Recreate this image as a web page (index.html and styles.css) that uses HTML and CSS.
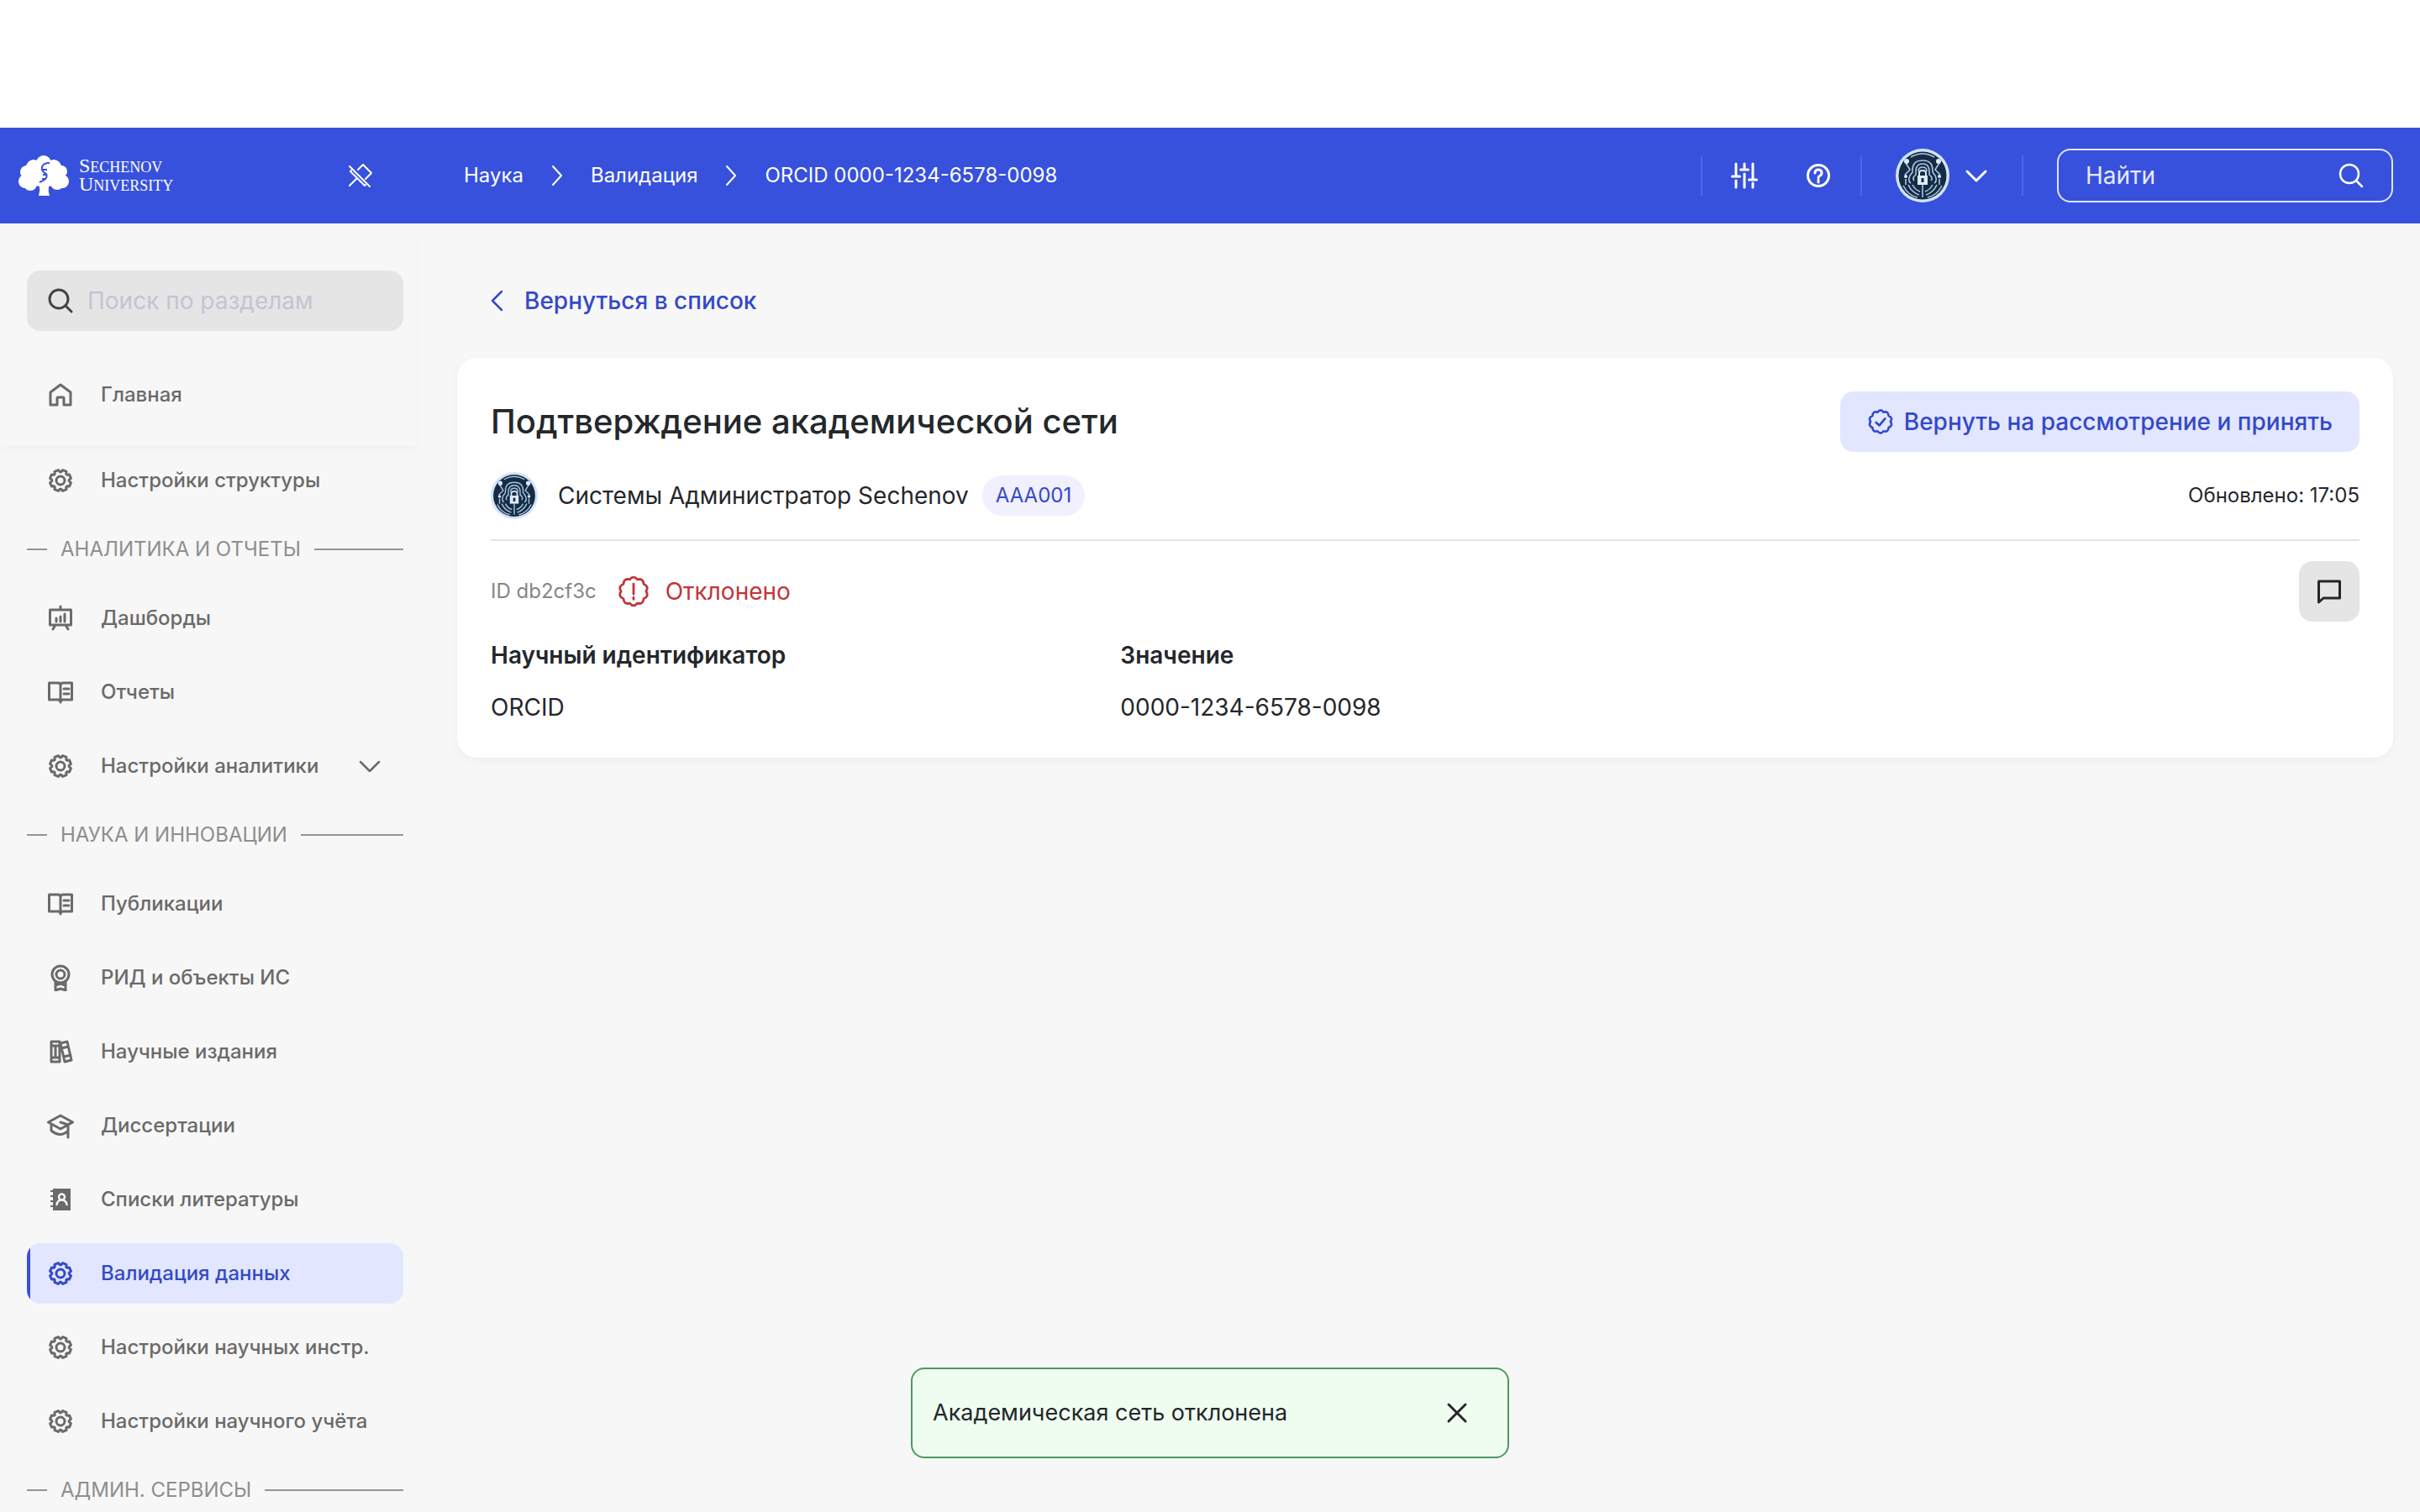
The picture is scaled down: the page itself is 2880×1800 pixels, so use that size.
FILE: index.html
```html
<!DOCTYPE html>
<html lang="ru">
<head>
<meta charset="utf-8">
<title>ORCID 0000-1234-6578-0098</title>
<link rel="stylesheet" href="styles.css">
</head>
<body>
<svg class="sprite" aria-hidden="true">
  <symbol id="i-gear" viewBox="-16 -16 32 32"><path d="M10.2-.7L10.2.7 12.4 2.6 10.6 7 7.7 6.7 6.7 7.7 7 10.6 2.6 12.4.7 10.2-.7 10.2-2.6 12.4-7 10.6-6.7 7.7-7.7 6.7-10.6 7-12.4 2.6-10.2.7-10.2-.7-12.4-2.6-10.6-7-7.7-6.7-6.7-7.7-7-10.6-2.6-12.4-.7-10.2.7-10.2 2.6-12.4 7-10.6 6.7-7.7 7.7-6.7 10.6-7 12.4-2.6z"/><circle r="5"/></symbol>
  <symbol id="i-search" viewBox="0 0 32 32"><circle cx="14" cy="14" r="11"/><path d="M22 22l7 7"/></symbol>
  <symbol id="i-down" viewBox="0 0 32 32"><path d="M5 11l11 11 11-11"/></symbol>
  <symbol id="i-right" viewBox="0 0 32 32"><path d="M11 5l10 11-10 11"/></symbol>
  <symbol id="i-left" viewBox="0 0 32 32"><path d="M21 5L10 16l11 11"/></symbol>
  <symbol id="i-home" viewBox="0 0 32 32"><path d="M4 13L16 4l12 9v15h-8v-8q0-1-1-1h-6q-1 0-1 1v8H4z"/></symbol>
  <symbol id="i-board" viewBox="0 0 32 32"><path d="M3.500 6h25v18h-25zM16 2v4M10 24l-3 5M22 24l3 5M11 16v4M16 14v6M21 11v9"/></symbol>
  <symbol id="i-book" viewBox="0 0 32 32"><path d="M2.500 5H13q3 0 3 3 0-3 3-3h10.500v20H19q-3 0-3 3 0-3-3-3H2.500zM16 8v20M20 12h6M20 18h6"/></symbol>
  <symbol id="i-award" viewBox="0 0 32 32"><circle cx="16" cy="12" r="10"/><circle cx="16" cy="12" r="5"/><path d="M10 21v10l6-2 6 2V21M10 25l6-2 6 2"/></symbol>
  <symbol id="i-binders" viewBox="0 0 32 32"><path d="M5 4h10v24H5zM5 9h10M5 23h10M16 6l8-2 5 22-8 2zM17 12l8-2M20 22l8-2M10 9v14"/></symbol>
  <symbol id="i-cap" viewBox="0 0 32 32"><path d="M1.500 12L16 4l14.500 8L16 20zM5 14v8q11 9 20 0M16 12l9 3v15M25 15l3-2"/></symbol>
  <symbol id="i-contacts" viewBox="0 0 32 32"><path class="solid" d="M7 3h21v26H7v-4H4v-2h3v-4H4v-2h3v-4H4v-2h3V7H4V5h3z"/><circle class="cut" cx="17.500" cy="13" r="3.500"/><path class="cut" d="M11.500 22q1-5.500 6-5.500t6 5.500"/></symbol>
  <symbol id="i-pin" viewBox="0 0 32 32"><path d="M13 9l6-6 10 10-7 7M3 5l24 24M5 10l-1 1 17 17 1-1M11 20l-8 8"/></symbol>
  <symbol id="i-sliders" viewBox="0 0 32 32"><path d="M6 2v15M6 22v8M1.500 17h9M16 2v6M16 14v16M11.500 9h9M26 2v16M26 25v5M21.500 21h9M26 18v3"/></symbol>
  <symbol id="i-help" viewBox="0 0 32 32"><circle cx="16" cy="16" r="12.500"/><path d="M12 13q0-4 4-4t4 4q0 2-2 3t-2 3M16 21.500v2.500"/></symbol>
  <symbol id="i-seal" viewBox="-18 -18 36 36"><path d="M-4.100-12.700Q0-17.800 4.100-12.700 10.400-14.400 10.800-7.900 16.800-5.500 13.400 0 16.800 5.500 10.800 7.900 10.400 14.400 4.100 12.700 0 17.800-4.100 12.700-10.400 14.400-10.800 7.900-16.800 5.500-13.400 0-16.800-5.500-10.800-7.900-10.400-14.400-4.100-12.700z"/></symbol>
  <symbol id="i-reject" viewBox="-18 -18 36 36"><use href="#i-seal" x="-18" y="-18" width="36" height="36"/><path d="M0-8V3M0 6.500V8.500"/></symbol>
  <symbol id="i-accept" viewBox="-18 -18 36 36"><use href="#i-seal" x="-18" y="-18" width="36" height="36"/><path d="M-6 1l4.500 4L6-4"/></symbol>
  <symbol id="i-comment" viewBox="0 0 32 32"><path d="M3.500 4h25v20H9l-5.500 5z"/></symbol>
  <symbol id="i-close" viewBox="0 0 32 32"><path d="M6 6l20 20M26 6L6 26"/></symbol>
  <symbol id="i-avatar" viewBox="0 0 64 64">
    <circle cx="32" cy="32" r="32" fill="#d3e3fa"/><circle cx="32" cy="32" r="28.500" fill="#152c44"/>
    <g fill="none" stroke="#a9c6e2" stroke-width="1.600">
      <path d="M18 41q-4-3-1-9l3-4q-1-14 12-14t12 14l3 4q3 6-1 9M22 38q-3-3 2-7v-4q0-9 8-9t8 9v4q5 4 2 7M27 27q0-5 5-5t5 5"/>
      <path d="M9 44q6 12 17 14M55 44q-6 12-17 14M15 43q4 9 13 12M49 43q-4 9-13 12M20 43q3 6 9 8M44 43q-3 6-9 8M12 17l5 8-6 6M52 17l-5 8 6 6M12 36v7M52 36v7M18 10q14-8 28 0M32 43v15"/>
      <path d="M28 32v-3q0-3 4-3t4 3v3" stroke="#dcebfa" stroke-width="2"/>
    </g>
    <g fill="#dcebfa"><circle cx="13" cy="15" r="3"/><circle cx="51" cy="15" r="3"/><circle cx="12" cy="33" r="2"/><circle cx="52" cy="33" r="2"/><rect x="26" y="32" width="12" height="11"/></g>
    <path d="M32 35v5" stroke="#152c44" stroke-width="3"/>
  </symbol>
</svg>

<div class="app">
  <header class="topbar">
    <div class="brand-area">
      <a class="brand" href="#">
        <svg class="tree" viewBox="0 0 60 48" aria-hidden="true">
          <g fill="#fff"><circle cx="30" cy="9" r="9"/><circle cx="18" cy="14" r="9"/><circle cx="42" cy="14" r="9"/><circle cx="51" cy="19" r="7"/><circle cx="10" cy="20" r="8"/><circle cx="8" cy="31" r="8"/><circle cx="52" cy="31" r="8"/><circle cx="14" cy="34" r="8"/><circle cx="46" cy="33" r="8"/><path d="M12 16h36v18l-12 3q-1 6 1 11H24q2-6 1-11l-13-3z"/></g>
          <path d="M37 9q-8 0-9 5t5 8q3 6-8 10M27 17h7M29 23h5M28 28h5" fill="none" stroke="#3751dd" stroke-width="2"/>
        </svg>
        <span class="brand-name"><span>S<small>ECHENOV</small></span><span>U<small>NIVERSITY</small></span></span>
      </a>
      <button class="icon-button" aria-label="Открепить меню"><svg class="icon thin"><use href="#i-pin"/></svg></button>
    </div>
    <nav class="crumbs">
      <a href="#">Наука</a><svg class="icon thin"><use href="#i-right"/></svg>
      <a href="#">Валидация</a><svg class="icon thin"><use href="#i-right"/></svg>
      <a href="#">ORCID 0000-1234-6578-0098</a>
    </nav>
    <div class="tools">
      <button class="icon-button wide" aria-label="Настройки"><svg class="icon bold"><use href="#i-sliders"/></svg></button>
      <button class="icon-button wide" aria-label="Помощь"><svg class="icon bold"><use href="#i-help"/></svg></button>
    </div>
    <button class="profile" aria-label="Профиль"><svg class="avatar large"><use href="#i-avatar"/></svg><svg class="icon bold"><use href="#i-down"/></svg></button>
    <div class="find-area">
      <label class="find"><input type="search" placeholder="Найти" aria-label="Найти"><svg class="icon"><use href="#i-search"/></svg></label>
    </div>
  </header>

  <div class="body">
    <aside class="sidebar">
      <div class="sidebar-top">
        <label class="section-search"><svg class="icon bold"><use href="#i-search"/></svg><input type="search" placeholder="Поиск по разделам" aria-label="Поиск по разделам"></label>
        <a class="item" href="#"><svg class="icon bold"><use href="#i-home"/></svg>Главная</a>
      </div>
      <nav class="menu">
        <a class="item" href="#"><svg class="icon bold"><use href="#i-gear"/></svg>Настройки структуры</a>
        <h2 class="group">АНАЛИТИКА И ОТЧЕТЫ</h2>
        <a class="item" href="#"><svg class="icon bold"><use href="#i-board"/></svg>Дашборды</a>
        <a class="item" href="#"><svg class="icon bold"><use href="#i-book"/></svg>Отчеты</a>
        <a class="item" href="#"><svg class="icon bold"><use href="#i-gear"/></svg>Настройки аналитики<svg class="icon expand"><use href="#i-down"/></svg></a>
        <h2 class="group">НАУКА И ИННОВАЦИИ</h2>
        <a class="item" href="#"><svg class="icon bold"><use href="#i-book"/></svg>Публикации</a>
        <a class="item" href="#"><svg class="icon bold"><use href="#i-award"/></svg>РИД и объекты ИС</a>
        <a class="item" href="#"><svg class="icon bold"><use href="#i-binders"/></svg>Научные издания</a>
        <a class="item" href="#"><svg class="icon bold"><use href="#i-cap"/></svg>Диссертации</a>
        <a class="item" href="#"><svg class="icon"><use href="#i-contacts"/></svg>Списки литературы</a>
        <a class="item active" href="#" aria-current="page"><svg class="icon bold"><use href="#i-gear"/></svg>Валидация данных</a>
        <a class="item" href="#"><svg class="icon bold"><use href="#i-gear"/></svg>Настройки научных инстр.</a>
        <a class="item" href="#"><svg class="icon bold"><use href="#i-gear"/></svg>Настройки научного учёта</a>
        <h2 class="group">АДМИН. СЕРВИСЫ</h2>
      </nav>
    </aside>

    <main class="content">
      <a class="back" href="#"><svg class="icon"><use href="#i-left"/></svg>Вернуться в список</a>
      <section class="card">
        <div class="row title-row">
          <h1>Подтверждение академической сети</h1>
          <button class="accept"><svg class="icon bold"><use href="#i-accept"/></svg>Вернуть на рассмотрение и принять</button>
        </div>
        <div class="row person-row">
          <svg class="avatar"><use href="#i-avatar"/></svg>
          <span class="person">Системы Администратор Sechenov</span>
          <span class="badge">AAA001</span>
          <span class="updated">Обновлено: 17:05</span>
        </div>
        <div class="row status-row">
          <span class="record-id">ID db2cf3c</span>
          <span class="status"><svg class="icon"><use href="#i-reject"/></svg>Отклонено</span>
          <button class="comment" aria-label="Комментарии"><svg class="icon bold"><use href="#i-comment"/></svg></button>
        </div>
        <dl class="fields">
          <div><dt>Научный идентификатор</dt><dd>ORCID</dd></div>
          <div><dt>Значение</dt><dd>0000-1234-6578-0098</dd></div>
        </dl>
      </section>
    </main>
  </div>
</div>

<div class="toast" role="status">
  <span>Академическая сеть отклонена</span>
  <button class="icon-button" aria-label="Закрыть"><svg class="icon bold"><use href="#i-close"/></svg></button>
</div>
</body>
</html>
```
FILE: styles.css
```css
* { box-sizing: border-box; }

body {
  margin: 0;
  background: #fff;
  color: #24272b;
  font: 400 28px/40px Inter, "Noto Sans", sans-serif;
}

a { color: inherit; text-decoration: none; }
button, input { font: inherit; color: inherit; border: 0; background: none; padding: 0; }
h1, h2, dl, dd { margin: 0; }
.sprite { position: absolute; width: 0; height: 0; }

.icon {
  width: 32px;
  height: 32px;
  flex: none;
  fill: none;
  stroke: currentColor;
  stroke-width: 2.5;
  stroke-linecap: round;
  stroke-linejoin: round;
}
.icon.bold { stroke-width: 3; }
.icon.thin { stroke-width: 2; }
.solid { fill: currentColor; stroke: none; }
.cut { stroke: #f7f7f7; }
.avatar { width: 56px; height: 56px; flex: none; }
.avatar.large { width: 64px; height: 64px; }
.icon-button { display: flex; align-items: center; justify-content: center; }
.icon-button.wide { width: 72px; }

.app { display: flex; flex-direction: column; height: 100vh; padding-top: 152px; overflow: hidden; }

/* Top bar */
.topbar {
  display: flex;
  align-items: center;
  flex: none;
  height: 114px;
  padding-right: 32px;
  background: #3751dd;
  color: #fff;
}
.brand-area {
  display: flex;
  align-items: center;
  justify-content: space-between;
  width: 480px;
  margin-right: 72px;
  padding: 0 35px 0 22px;
}
.brand { display: flex; align-items: center; gap: 12px; }
.tree { width: 60px; height: 48px; }
.brand-name { display: flex; flex-direction: column; font: 24px/20px "Liberation Serif", serif; }
.brand-name small { font-size: 18px; }
.crumbs { display: flex; align-items: center; gap: 24px; font-size: 24px; }
.tools {
  display: flex;
  align-items: center;
  gap: 16px;
  height: 48px;
  margin-left: auto;
  padding: 0 14px;
  border-left: 2px solid #4d66e6;
}
.profile { display: flex; align-items: center; gap: 16px; position: relative; padding: 0 38px 0 42px; }
.profile::before {
  content: "";
  position: absolute;
  left: 0;
  height: 48px;
  border-left: 2px solid #4d66e6;
}
.find-area {
  display: flex;
  align-items: center;
  height: 48px;
  padding-left: 40px;
  border-left: 2px solid #4d66e6;
}
.find {
  display: flex;
  align-items: center;
  width: 400px;
  height: 64px;
  padding: 0 32px;
  border: 2px solid #dfe5ff;
  border-radius: 16px;
}
.find input { flex: 1; min-width: 0; outline: 0; }
.find input::placeholder { color: #e6eaff; opacity: 1; }

/* Sidebar */
.body { display: flex; flex: 1; min-height: 0; background: #f7f7f7; }
.sidebar { flex: none; width: 512px; padding-right: 16px; overflow: hidden; }
.sidebar-top {
  display: flex;
  flex-direction: column;
  gap: 40px;
  position: relative;
  padding: 56px 16px 24px 32px;
  background: #f7f7f7;
  box-shadow: 0 8px 8px rgba(0, 0, 0, .02);
}
.section-search {
  display: flex;
  align-items: center;
  gap: 16px;
  height: 72px;
  padding: 0 24px;
  border-radius: 16px;
  background: #e5e5e5;
  color: #444;
}
.section-search input { flex: 1; min-width: 0; outline: 0; }
.section-search input::placeholder { color: #c3c4d2; opacity: 1; }
.menu { display: flex; flex-direction: column; gap: 16px; padding: 6px 16px 0 32px; }
.item {
  display: flex;
  align-items: center;
  gap: 32px;
  height: 72px;
  flex: none;
  padding: 0 24px;
  border-radius: 16px;
  color: #6a6a6a;
  font-size: 24px;
  font-weight: 500;
}
.item .expand { margin-left: auto; }
.item.active { background: linear-gradient(90deg, #3751dd 4px, #e2e7ff 4px); color: #3549c8; }
.group {
  display: flex;
  align-items: center;
  gap: 16px;
  height: 60px;
  flex: none;
  color: #8e8e8e;
  font-size: 24px;
  font-weight: 400;
}
.group::before, .group::after { content: ""; width: 24px; height: 2px; background: #949494; }
.group::after { flex: 1; }

/* Content */
.content { flex: 1; min-width: 0; padding: 72px 32px 32px; }
.back {
  display: flex;
  align-items: center;
  gap: 16px;
  width: max-content;
  margin: 0 0 48px 32px;
  color: #3549c8;
  font-weight: 500;
}
.card {
  padding: 40px;
  border-radius: 24px;
  background: #fff;
  box-shadow: 0 4px 12px rgba(0, 0, 0, .04);
}
.row { display: flex; align-items: center; }
.title-row { justify-content: space-between; }
h1 { font-size: 40px; font-weight: 500; line-height: 48px; }
.accept {
  display: flex;
  align-items: center;
  gap: 12px;
  height: 72px;
  padding: 0 32px;
  border-radius: 16px;
  background: #e2e7ff;
  color: #3549c8;
  font-weight: 500;
}
.person-row { padding: 24px 0; border-bottom: 2px solid #e4e4e4; }
.person { margin: 0 16px 0 24px; }
.badge { padding: 4px 16px; border-radius: 24px; background: #f1f0ff; color: #3549c8; font-size: 24px; }
.updated { margin-left: auto; font-size: 24px; }
.status-row { gap: 24px; margin: 24px 0 20px; }
.record-id { color: #858585; font-size: 24px; }
.status { display: flex; align-items: center; gap: 18px; color: #c0353a; }
.status .icon { width: 40px; height: 40px; }
.comment {
  display: flex;
  align-items: center;
  justify-content: center;
  width: 72px;
  height: 72px;
  margin-left: auto;
  border-radius: 16px;
  background: #e5e5e5;
}
.fields { display: grid; grid-template-columns: repeat(3, 1fr); gap: 24px; }
.fields dt { margin-bottom: 22px; font-weight: 600; }

/* Notification */
.toast {
  display: flex;
  align-items: center;
  justify-content: space-between;
  position: fixed;
  bottom: 64px;
  left: 50%;
  width: 712px;
  height: 108px;
  margin-left: -356px;
  padding: 0 44px 0 24px;
  border: 2px solid #4c9a5f;
  border-radius: 16px;
  background: #effdf0;
  font-size: 27px;
}
```
